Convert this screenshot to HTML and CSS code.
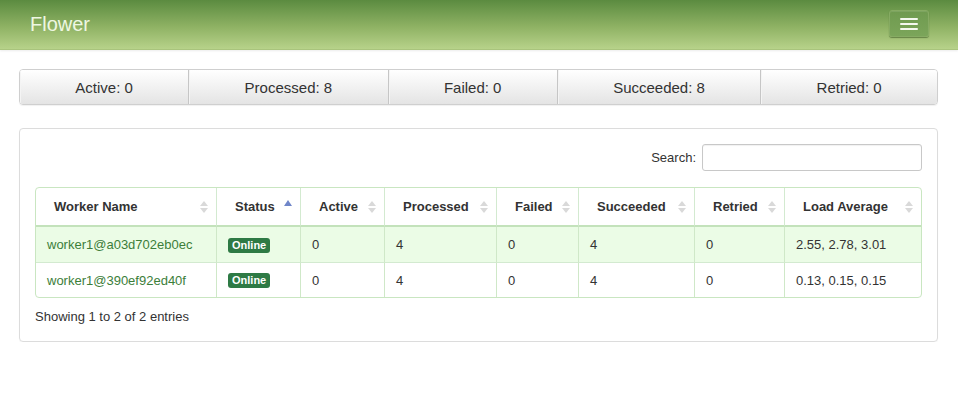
FILE: index.html
```html
<!DOCTYPE html>
<html>
<head>
<meta charset="utf-8">
<link rel="stylesheet" href="styles.css">
</head>
<body>
<nav class="navbar">
  <span class="brand">Flower</span>
  <button class="toggle"><span class="bar"></span><span class="bar"></span><span class="bar"></span></button>
</nav>
<main class="container">
  <div class="stats">
    <div class="stat">Active: 0</div>
    <div class="stat">Processed: 8</div>
    <div class="stat">Failed: 0</div>
    <div class="stat">Succeeded: 8</div>
    <div class="stat">Retried: 0</div>
  </div>
  <section class="panel">
    <div class="search-row">
      <label class="search-label">Search:</label>
      <input class="search-input" type="text">
    </div>
    <table class="workers">
      <thead>
        <tr>
          <th class="c-name sortable">Worker Name</th>
          <th class="c-status sorted">Status</th>
          <th class="c-active sortable">Active</th>
          <th class="c-proc sortable">Processed</th>
          <th class="c-failed sortable">Failed</th>
          <th class="c-succ sortable">Succeeded</th>
          <th class="c-retried sortable">Retried</th>
          <th class="c-load sortable">Load Average</th>
        </tr>
      </thead>
      <tbody>
        <tr class="hl">
          <td><a class="wlink">worker1@a03d702eb0ec</a></td>
          <td><span class="badge">Online</span></td>
          <td>0</td><td>4</td><td>0</td><td>4</td><td>0</td><td>2.55, 2.78, 3.01</td>
        </tr>
        <tr>
          <td><a class="wlink">worker1@390ef92ed40f</a></td>
          <td><span class="badge">Online</span></td>
          <td>0</td><td>4</td><td>0</td><td>4</td><td>0</td><td>0.13, 0.15, 0.15</td>
        </tr>
      </tbody>
    </table>
    <div class="info">Showing 1 to 2 of 2 entries</div>
  </section>
</main>
</body>
</html>
```
FILE: styles.css
```css
* { box-sizing: border-box; }
body {
  margin: 0;
  font-family: "Liberation Sans", Arial, sans-serif;
  font-size: 13px;
  color: #333;
  background: #fff;
}
.navbar {
  height: 50px;
  display: flex;
  align-items: center;
  justify-content: space-between;
  padding: 0 30px 0 30px;
  background: linear-gradient(to bottom, #5b8b40 0%, #8fb264 55%, #b7d28a 100%);
  border-bottom: 1px solid #a9c47d;
  box-shadow: 0 1px 2px rgba(0,0,0,0.08);
}
.brand {
  color: #eef7e2;
  font-size: 20px;
  line-height: 20px;
  margin-top: -2px;
}
.toggle {
  width: 40px;
  height: 27px;
  margin-top: -2px;
  margin-right: -1px;
  display: flex;
  flex-direction: column;
  align-items: center;
  justify-content: center;
  gap: 3px;
  background: linear-gradient(to bottom, #6f9a4f, #7ba55a);
  border: 1px solid #86ab63;
  border-radius: 3px;
  box-shadow: 0 1px 1px rgba(40,70,20,0.5), inset 0 1px 0 rgba(255,255,255,0.1);
  padding: 0;
}
.toggle .bar {
  display: block;
  width: 18px;
  height: 2px;
  background: #f4f8ee;
  border-radius: 1px;
}
.container {
  padding: 19px 20px 0 19px;
}
.stats {
  display: flex;
  height: 36px;
  border: 1px solid #cfcfcf;
  border-radius: 4px;
  overflow: hidden;
  box-shadow: 0 1px 1px rgba(0,0,0,0.06);
}
.stat {
  flex: 1 1 auto;
  display: flex;
  align-items: center;
  justify-content: center;
  font-size: 15px;
  color: #333;
  background: linear-gradient(to bottom, #ffffff, #e4e4e4);
  border-left: 1px solid #c6c6c6;
  box-shadow: inset 1px 0 0 #f4f4f4;
}
.stat:first-child { border-left: none; }
.panel {
  margin-top: 23px;
  border: 1px solid #dcdcdc;
  border-radius: 4px;
  padding: 15px 15px 17px 15px;
  box-shadow: 0 1px 1px rgba(0,0,0,0.04);
}
.search-row {
  display: flex;
  justify-content: flex-end;
  align-items: center;
  gap: 6px;
}
.search-label { font-size: 13px; color: #333; }
.search-input {
  width: 220px;
  height: 27px;
  border: 1px solid #c8c8c8;
  border-radius: 3px;
  box-shadow: inset 0 1px 1px rgba(0,0,0,0.06);
}
.workers {
  width: 887px;
  margin-top: 16px;
  border-collapse: separate;
  border-spacing: 0;
  border: 1px solid #c9e6c1;
  border-radius: 4px;
}
.workers th {
  height: 39px;
  font-weight: bold;
  font-size: 13px;
  text-align: left;
  color: #333;
  border-left: 1px solid #d3ead0;
  border-bottom: 2px solid #c3e2bb;
  padding: 0 20px 0 18px;
  position: relative;
}
.workers th:first-child { border-left: none; }
.workers td {
  height: 35px;
  padding: 0 11px;
  border-left: 1px solid #cfe8c8;
  border-top: 1px solid #d3ead0;
  color: #333;
  font-size: 13px;
}
.workers td:first-child { border-left: none; }
.workers tbody tr:first-child td { border-top: none; }
.workers tr.hl td { background: #ebfce6; }
.c-name { width: 180px; }
.c-status { width: 84px; }
.c-active { width: 84px; }
.c-proc { width: 112px; }
.c-failed { width: 82px; }
.c-succ { width: 116px; }
.c-retried { width: 90px; }
.wlink { color: #3c7e3a; text-decoration: none; }
.badge {
  display: inline-block;
  background: #2e7a45;
  color: #fff;
  font-weight: bold;
  font-size: 11px;
  line-height: 11px;
  padding: 2px 4px 2px 4px;
  border-radius: 3px;
}
.sortable::before, .sortable::after {
  content: "";
  position: absolute;
  right: 8px;
  width: 0; height: 0;
  border-left: 4px solid transparent;
  border-right: 4px solid transparent;
}
.sortable::before {
  top: 13px;
  border-bottom: 5px solid #d9d9d9;
}
.sortable::after {
  top: 20px;
  border-top: 5px solid #d9d9d9;
}
.sorted::after {
  content: "";
  position: absolute;
  right: 8px;
  top: 12px;
  width: 0; height: 0;
  border-left: 4px solid transparent;
  border-right: 4px solid transparent;
  border-bottom: 6px solid #6f86c9;
}
.info {
  margin-top: 11px;
  font-size: 13px;
  color: #333;
}
```
